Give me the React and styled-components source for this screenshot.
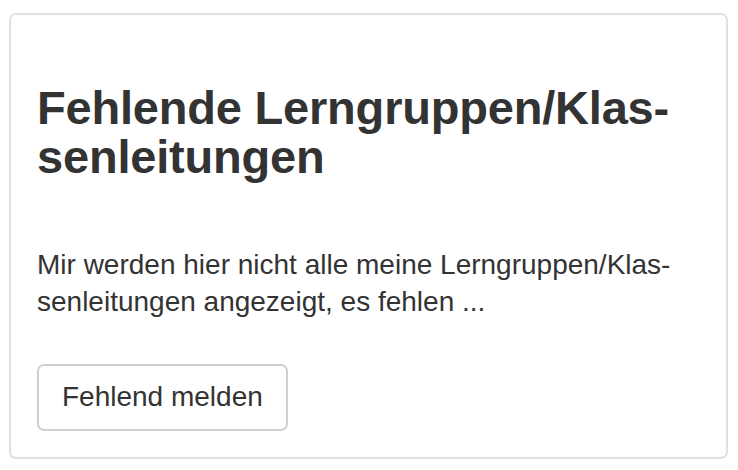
import React from 'react'
import styled, { createGlobalStyle } from 'styled-components'

const GlobalStyle = createGlobalStyle`
  html, body {
    margin: 0;
    padding: 0;
    background: #fff;
  }
  body {
    font-family: "Liberation Sans", Arial, sans-serif;
    color: #333;
  }
`

export default function App() {
  return (
    <>
      <GlobalStyle />
      <Page>
        <Card>
          <Title>Fehlende Lerngruppen/Klas&shy;senleitungen</Title>
          <Text>
            Mir werden hier nicht alle meine Lerngruppen/Klas&shy;senleitungen angezeigt, es fehlen ...
          </Text>
          <Button type="button">Fehlend melden</Button>
        </Card>
      </Page>
    </>
  )
}

const Page = styled.div`
  padding: 13px 0 0 9px;
`

const Card = styled.div`
  box-sizing: border-box;
  width: 719px;
  height: 446px;
  border: 2px solid #e0e0e0;
  border-radius: 7px;
  padding: 68px 20px 26px 26px;
  display: flex;
  flex-direction: column;
  align-items: flex-start;
`

const Title = styled.h2`
  margin: 0;
  font-size: 47px;
  line-height: 49px;
  letter-spacing: -0.2px;
  font-weight: 700;
  color: #333;
  hyphens: manual;
`

const Text = styled.p`
  margin: 65px 0 0 0;
  font-size: 28px;
  line-height: 37.4px;
  color: #333;
  hyphens: manual;
`

const Button = styled.button`
  flex-shrink: 0;
  margin-top: 43px;
  box-sizing: border-box;
  height: 67px;
  padding: 0 23px;
  border: 2px solid #d0d0d0;
  border-radius: 7px;
  background: #fff;
  font-family: "Liberation Sans", Arial, sans-serif;
  font-size: 28px;
  color: #333;
`
